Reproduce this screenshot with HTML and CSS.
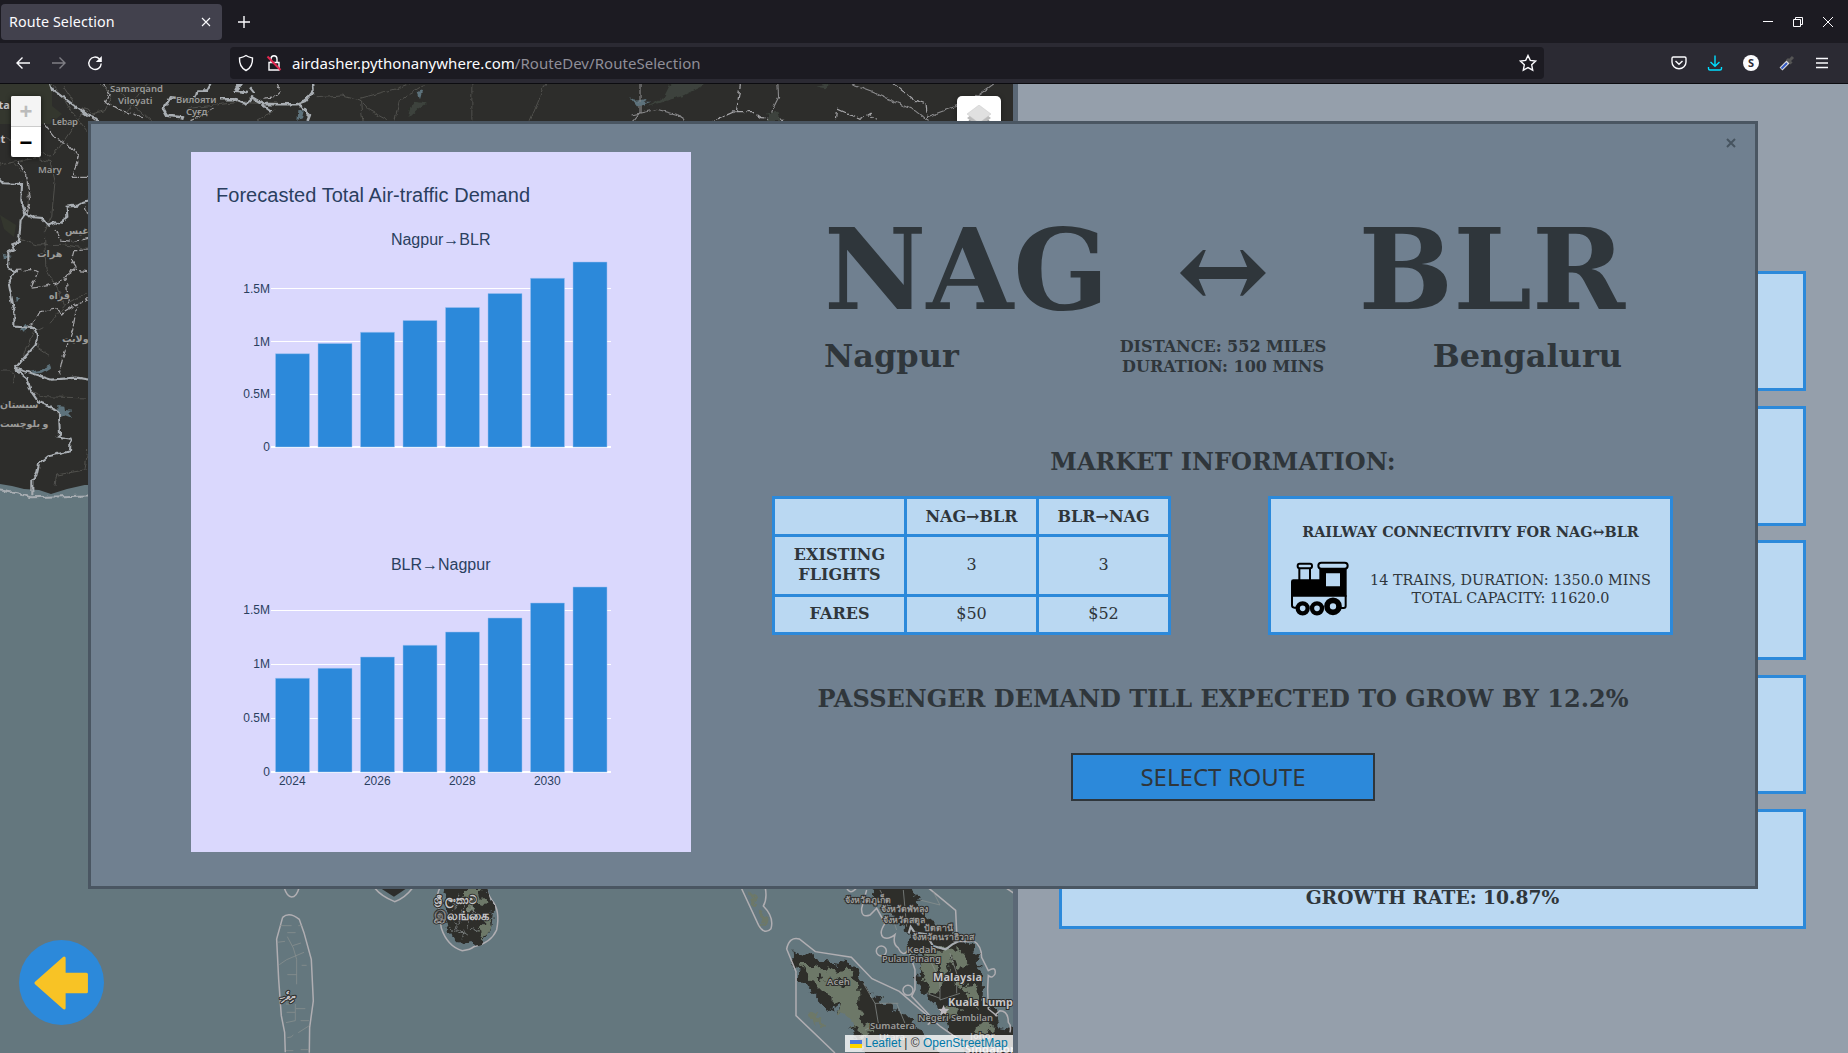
FILE: index.html
```html
<!DOCTYPE html>
<html lang="en">
<head>
<meta charset="utf-8">
<title>Route Selection</title>
<link rel="stylesheet" href="styles.css">
</head>
<body>
<header class="browser">
  <div class="tabbar">
    <div class="tab"><span class="tab-title">Route Selection</span>
      <svg class="tab-close" width="10" height="10" viewBox="0 0 10 10"><path d="M1 1l8 8M9 1L1 9"/></svg>
    </div>
    <svg class="new-tab" width="12" height="12" viewBox="0 0 12 12"><path d="M6 0v12M0 6h12"/></svg>
    <div class="window-controls">
      <svg width="12" height="12" viewBox="0 0 12 12"><path d="M1 5.500h10"/></svg>
      <svg width="12" height="12" viewBox="0 0 12 12"><path d="M1.500 3.500h7v7h-7zM3.500 3V1.500h7v7H9"/></svg>
      <svg width="12" height="12" viewBox="0 0 12 12"><path d="M1 1l10 10M11 1L1 11"/></svg>
    </div>
  </div>
  <div class="toolbar">
    <div class="nav">
      <svg width="16" height="16" viewBox="0 0 16 16"><path d="M15 8H2M7.500 2.500L2 8l5.500 5.500"/></svg>
      <svg class="dim" width="16" height="16" viewBox="0 0 16 16"><path d="M1 8h13M8.500 2.500L14 8l-5.500 5.500"/></svg>
      <svg width="16" height="16" viewBox="0 0 16 16"><path d="M12.500 4A6.200 6.200 0 1 0 14.200 8.500"/><path class="solid" d="M14.800 1v6H8.800z"/></svg>
    </div>
    <div class="url">
      <svg width="16" height="18" viewBox="0 0 16 18"><path d="M8 1.500C10 3 12.500 3.500 14.500 4 14.800 10 12 14.500 8 16.500 4 14.500 1.200 10 1.500 4 3.500 3.500 6 3 8 1.500z"/></svg>
      <svg class="lock" width="16" height="18" viewBox="0 0 16 18"><path d="M3 8.500h10v7.500H3zM5 8V5a3 3.200 0 0 1 6 0v3"/><path class="slash" d="M1.500 2.500l13 13.500"/></svg>
      <span class="address">airdasher.pythonanywhere.com<i>/RouteDev/RouteSelection</i></span>
      <svg class="star" width="18" height="18" viewBox="0 0 18 18"><path d="M9 1.500l2.300 4.900 5.300.7-3.900 3.700 1 5.400L9 13.600l-4.700 2.600 1-5.400L1.400 7.100l5.300-.7z"/></svg>
    </div>
    <div class="extensions">
      <svg width="16" height="16" viewBox="0 0 16 16"><path d="M2.300 2h11.400Q15 2 15 3.300V7a7 6.800 0 0 1-14 0V3.300Q1 2 2.300 2zM4.500 6L8 9.300 11.500 6"/></svg>
      <svg class="download" width="16" height="16" viewBox="0 0 16 16"><path d="M8 .5V11M3.500 7L8 11.300 12.500 7M1.500 12v1.500Q1.500 15 3 15h10q1.500 0 1.500-1.500V12"/></svg>
      <span class="s-badge">S</span>
      <svg class="dropper" width="16" height="16" viewBox="0 0 16 16"><path stroke="#ddd" stroke-width="4" d="M2 14L10 6"/><path class="ink" d="M2.500 13.500L8 8"/><path class="bulb" d="M9.500 6.500L14 2M8 4l4.500 4.500"/></svg>
      <svg width="14" height="14" viewBox="0 0 14 14"><path d="M1 2.500h12M1 7h12M1 11.500h12"/></svg>
    </div>
  </div>
</header>

<main class="page">
  <section class="map">
    <svg class="tiles" width="1013" height="969" viewBox="0 84 1013 969">
      <defs>
        <filter id="rough" x="-5%" y="-5%" width="110%" height="110%"><feTurbulence type="fractalNoise" baseFrequency=".12" numOctaves="3" seed="4"/><feDisplacementMap in="SourceGraphic" scale="14" xChannelSelector="R" yChannelSelector="G"/></filter>
        <filter id="jagged" x="-5%" y="-5%" width="110%" height="110%"><feTurbulence type="fractalNoise" baseFrequency=".15" numOctaves="2" seed="9"/><feDisplacementMap in="SourceGraphic" scale="5" xChannelSelector="R" yChannelSelector="G"/></filter>
      </defs>
      <path class="land" d="M0 84H1013V500H0z"/>
      <path class="sea" d="M0 484l12 2 12 3 15 1 12 4 16-5 22-5v600H0zM88 484h925v569H88z"/>
      <path class="green" d="M0 84h52v22l10 8-12 10H0zM0 215l16 10-2 12-10-8z"/>

      <!-- western borders, roads and lakes -->
      <g filter="url(#jagged)"><g transform="translate(0 80) scale(.3333)">
        <path class="water" d="M175 975l18 2 2 13 20 2-10 8 12 14-22-8-15 6-5-18zM90 875l30-5 30-15 3 8-25 15-38 5zM45 648l16 6-14 12zM8 522l28 6-24 8zM60 750l15-20 8 10-8 18z"/>
        <path class="road" d="M15 170l30 18 50 3 45 38 22-3 75-110 18-28M45 250l35 40 5 90M95 230l55 15 15 60-10 105-22 45 5 115 35 55 20 50M0 255l50-10 60-12M50 475l60 20 70-2 80 12M130 740l-30 15-30 70M0 870l25 0 20 15-5 25M90 930l35 20 135 4M165 1215l5-30 85-15 8-60M150 730l50-60 60-30M110 760l6 45 30 20M190 20l40 60 35 10 20 30M160 15l70 100 30 40M300 12l35 35-20 45-40 10 12 20"/>
        <path class="province" d="M130 130l35 45 40 18 30 38-16 58h45M55 245l25 40 8 75-10 40M165 450l15 30 40 5 44-10M262 510l-40 2-8 30 14 22-25 20M264 575l-52-6-14 30-55 18-50 8 20-48-14-8-55 2M95 740l25-45 45-8 20 12 40-25 40-18M230 680l-12 70-30 85-10 45M200 610l5 60M264 405l-8-25M240 85l45 35"/>
        <path class="border" d="M150 12l5 15 110 80 20 5 12 12M-10 290l18 20 58 2-2 50 12 40 25 10 24 2 20 23 20-10 12 3 25-20-2-30 30-3 20-12 36-8M76 400l-14 20-5 65-20 8 8 14-20 10 0 48 22 10-22 30 18 88 0 47 60 5 8 24-4 26-62 70 110 34 75-6 38 6M46 866l35 30 10 35 25 36 60 25 4 70-8 8 40 6-2 38-65 15-28 22-8 35-12 15 0 45"/>
        <path class="border" d="M-10 1230l60 10 45 12 190-6"/>
      </g></g>
      <!-- northern strip -->
      <g filter="url(#jagged)"><g transform="scale(.459 .3333)">
        <path class="road" d="M230 235l60 80 40 50M330 235l-60 110M410 325l120-20 100 5M600 330l-40 30M690 290l55-5 40 15 20 30 40 30M785 295l80-30 60-32M785 300l5 62M860 362l10-60 55-45M1028 232v130M1195 232l-40 130"/>
        <path class="province" d="M220 245l20 35-10 25 30 25 50 20M465 325l-30 25-20 12M600 245l12 30-12 15-30 5"/>
        <path class="border thick" d="M465 232l-15 40-20 0-5 25-55-5-15 35 8 20 35 5-2 10M530 242l-15 30 25 5M480 298l30 0 25 15 15-20 25 20 70 0 20-10 18-30-2-45M570 315l20 20M650 310l25 35-5 18M520 250l-8 20M545 262l8 14"/>
        <path class="water" d="M650 335l12-5-4 25-10 5zM1370 290l15 12 25-6-20 20zM910 275l10-5-5 25z"/>
        <path class="greenish" d="M1405 325l40-30 20-55 60-8 10 22-50 35-50 20zM900 305l30 5-20 20-20 25z"/>
      </g>
      <g transform="translate(180 80) scale(.561 .3333)">
        <path class="road bright" d="M820 -10v107l-12 25M805 105l45-17 44 20 5 25M1065 -10l2 62-12 40 5 40M1175 0l60 37 75 55 30 40M1460 0l-50 62-80 50"/>
        <path class="province" d="M1000 0l-8 92-42 31M990 95l30 0 15 18 40 5M1265 0l40 57 25 15 2 42M1170 123l2-35 40 30 18-18 10 18"/>
        <path class="water" d="M803 55l12 10 25 0-25 15z"/>
        <path class="greenish" d="M1045 100l22-5 3 28h-20zM1135 20l25-10-10 15z"/>
      </g></g>
      <!-- Lakshadweep and Sri Lanka -->
      <g transform="translate(0 870) scale(.3333)">
        <path class="coast" d="M853 54q8 26 22 27 15 0 22-27M1124 54q20 25 60 41 30-10 54-41"/>
        <path class="land" d="M1142 55h78l-38 25z"/>
        <path class="coast" d="M848 142q20-18 50 6l14 40 22 80 6 125-11 80-1 75M848 142l-18 65 6 120 8 110 10 50 2 60"/>
        <path class="minor" d="M840 167h35M895 167h10M862 188h25M832 217l23-3M862 200l18 34 10 34v75M878 227l25-8M838 284l22-15 52-22M862 314h28M905 286h15M858 402h18M888 416h28M886 402v50l-28 6M860 427h25M902 452h25M895 488l33-21M862 503q14 0 18-8M858 542h22M902 539h24"/>
        <path class="coast" d="M1320 54q-10 15-6 40l10 80q18 55 63 68 25-3 35-12 50-10 68-50 12-60-15-90-15-25-15-36"/>
      </g>
      <g filter="url(#rough)"><g transform="translate(0 870) scale(.3333)">
        <path class="land" d="M1340 34l-8 80 12 70 22 35 35 5 45-10 28-38 5-60-25-82z"/>
        <path class="green" d="M1395 54h50l10 55-30-12-10 35-18-28zM1440 170l30-30 3 40-30 25z"/>
        <path class="minor" d="M1350 95l35 15 25 60 30 15M1380 70l-20 60 30 70M1410 80l5 50 50 10M1350 175l60 20"/>
      </g></g>
      <!-- Malay peninsula and Sumatra -->
      <g filter="url(#rough)"><g transform="translate(720 870) scale(.3333)">
        <path class="green" d="M120 120l15 10 10 30-10 12-15-25zM85 65l18 10 12 25-8 5zM266 435l15-3 38 38-12 4-40-30z"/>
        <path class="land" d="M215 238l40 12 30 20 105 12 35 35 8 30 40 40 70 35 40 40 25 35 70 70H445l-45-80-12-45-35-25-40-10-70-70-20-55z"/>
        <path class="green" d="M240 285l45 0 45 22 60-8 25 35 0 95 45 60-30 10-50-50-40-55-60-60zM350 370l40 0 30 35-10 35z"/>
        <path class="land" d="M445 34l25 58 40 10 5 45 45 30 10 50 30 40-10 60 25 55 55 50 20 60 70 75h160v-85l-85-10-20-60-30-25 2-95-30-60-60-50-65-25-35-55-28-68z"/>
        <path class="green" d="M610 230l45 10 60-5 28 40-22 30-35-20-15 65-45 25-10-50-18-35zM728 350l40-12 5 75-35-35zM640 300l15 60-25 18zM700 330l30 5-10 25zM780 450l40 15-15 30-40-5zM680 400l40 20-10 30-25-10z"/>
        <path class="land" d="M650 260l14 40-12 10zM690 250l14 34-10 6zM300 310l14 20-14 0zM350 320l20 26-14 8z"/>
      </g></g>
      <g transform="translate(720 870) scale(.3333)">
        <path class="coast" d="M64 54l52 112q18 30 37 10 10-35-23-68 12-20 6-54"/>
        <path class="coast" d="M345 549L228 437V305l-28-68q8-38 38-30l48 38 108 17 62 64 82 38 60 52 65 55 75 52M627 55l80 66 4 85M860 55l20 14"/>
        <path class="coast" d="M380 54q10 22 30 0M440 60l-15 55q-2 30 25 20l20-20 25 45q-20 30-5 42 15 8 35-8-8 28 10 40 15 30 30 5l20 60 0 60-10 20 52 55q12 22-4 30M700 212q40 5 60 0 25 15 25 50l20 40q25-15 20 10-8 15-20 5l-2 40 2 60 25 20q-10 2 10-15 25 0 25 35 10 10 5 30"/>
        <circle class="coast" cx="484" cy="243" r="15"/><circle class="coast" cx="564" cy="361" r="15"/>
        <path class="border" d="M566 190l6-20 12 18 35 5 20 35 38 10 20-15 20-10"/>
        <path class="minor" d="M480 60l30 60 20 60M550 60l10 110M620 250l40 80 0 60 60-20M600 90l60 15-20-40M430 340l35 60 70 0M465 400l10 60-40 20M530 400l25 60M690 250l20 60 0 60M620 370l40 15"/>
        <path class="star-city" d="M671 405l5 11 12 1-9 8 3 12-11-7-11 7 3-12-9-8 12-1z"/>
      </g>
      <g class="labels">
        <text x="52" y="125" textLength="26">Lebap</text><text x="38" y="173">Mary</text>
        <text x="110" y="92">Samarqand</text><text x="118" y="104">Viloyati</text>
        <text x="176" y="103">Вилояти</text><text x="186" y="115">Суғд</text>
        <text x="65" y="234">غیس</text><text x="37" y="257">هرات</text><text x="49" y="299">فراه</text><text x="62" y="342">ولایت</text><text x="0" y="408">سیستان</text><text x="0" y="427">و بلوچست</text>
        <text class="country" x="-7" y="109">sta</text><text class="country" x="-6" y="143">at</text>
        <text class="thai" x="845" y="903">จังหวัดภูเก็ต</text><text class="thai" x="881" y="912">จังหวัดพัทลุง</text><text class="thai" x="883" y="923">จังหวัดสตูล</text><text class="thai" x="924" y="931">ปัตตานี</text><text class="thai" x="912" y="940">จังหวัดนราธิวาส</text>
        <text x="907" y="953">Kedah</text><text x="882" y="962" textLength="59">Pulau Pinang</text><text x="827" y="985">Aceh</text><text x="870" y="1029">Sumatera</text><text x="879" y="1040">Utara</text><text x="918" y="1021" textLength="75">Negeri Sembilan</text><text x="970" y="1039">Johor</text>
        <text class="country" x="933" y="981" textLength="49">Malaysia</text><text class="country" x="948" y="1006" textLength="65">Kuala Lump</text><text class="country" x="965" y="1053" textLength="50">Singapor</text>
        <text class="country" x="434" y="904">ශ්‍රී ලංකාව</text><text class="country tamil" x="434" y="920">இலங்கை</text><text class="country" x="280" y="1000">ދިވެހި</text>
      </g>
    </svg>
    <div class="zoom"><span class="off">+</span><span>−</span></div>
    <div class="layers"><svg width="26" height="26" viewBox="0 0 26 26"><path fill="#888" d="M1 17l12 9 12-9-4-3-8 6-8-6z"/><path fill="#bbb" d="M1 13l12 9 12-9-4-3-8 6-8-6z"/><path fill="#e0e0e0" stroke="#c8c8c8" stroke-width=".5" d="M13 0l12 9-12 9L1 9z"/></svg></div>
    <div class="back"><svg width="56" height="56" viewBox="0 0 54 54"><path d="M2 27L29 3v15.500h21.500v17H29V51z"/></svg></div>
    <div class="attribution"><svg width="12" height="8" viewBox="0 0 12 8"><path fill="#4c7be1" d="M0 0h12v4H0z"/><path fill="#ffd500" d="M0 4h12v4H0z"/></svg><span><a>Leaflet</a> | © <a>OpenStreetMap</a></span></div>
  </section>
  <aside class="routes">
    <div class="route-card"></div><div class="route-card"></div><div class="route-card"></div><div class="route-card"></div>
    <div class="route-card">GROWTH RATE: 10.87%</div>
  </aside>

  <div class="modal">
    <svg class="modal-close" width="10" height="10" viewBox="0 0 10 10"><path d="M1 1l8 8M9 1L1 9"/></svg>
    <svg class="chart" width="500" height="700" viewBox="191 152 500 700">
      <text class="title" x="216" y="202" textLength="314">Forecasted Total Air-traffic Demand</text>
      <text class="subtitle" x="440.700" y="245">Nagpur→BLR</text>
      <path class="grid" d="M271 288.500H611M271 341.500H611M271 394.500H611"/><path class="zero" d="M271 447H611"/>
      <g class="tick-y"><text x="270" y="293">1.5M</text><text x="270" y="346">1M</text><text x="270" y="398">0.5M</text><text x="270" y="451">0</text></g>
      <g class="bars"><path d="M275.500 447V353.700h34V447zM318 447V343.500h34V447zM360.500 447V332.300h34V447zM403 447V320.500h34V447zM445.500 447V307.500h34V447zM488 447V293.500h34V447zM530.500 447V278.300h34V447zM573 447V262h34V447z"/></g>
      <text class="subtitle" x="440.700" y="570">BLR→Nagpur</text>
      <path class="grid" d="M271 610.500H611M271 664.500H611M271 718.500H611"/><path class="zero" d="M271 772H611"/>
      <g class="tick-y"><text x="270" y="614">1.5M</text><text x="270" y="668">1M</text><text x="270" y="722">0.5M</text><text x="270" y="776">0</text></g>
      <g class="bars"><path d="M275.500 772V678.300h34V772zM318 772V668.300h34V772zM360.500 772V657h34V772zM403 772V645.300h34V772zM445.500 772V632h34V772zM488 772V618h34V772zM530.500 772V603h34V772zM573 772V587h34V772z"/></g>
      <g class="tick-x"><text x="292.300" y="785">2024</text><text x="377.300" y="785">2026</text><text x="462.300" y="785">2028</text><text x="547.300" y="785">2030</text></g>
    </svg>
    <div class="details">
      <div class="route">
        <div class="from"><b class="code">NAG</b><b class="city">Nagpur</b></div>
        <div class="link"><b class="code">↔</b><b>DISTANCE: 552 MILES<br>DURATION: 100 MINS</b></div>
        <div class="to"><b class="code">BLR</b><b class="city">Bengaluru</b></div>
      </div>
      <h2>MARKET INFORMATION:</h2>
      <div class="market">
        <table>
          <tr class="short"><th></th><th>NAG→BLR</th><th>BLR→NAG</th></tr>
          <tr class="tall"><th>EXISTING FLIGHTS</th><td>3</td><td>3</td></tr>
          <tr class="short"><th>FARES</th><td>$50</td><td>$52</td></tr>
        </table>
        <div class="rail">
          <b>RAILWAY CONNECTIVITY FOR NAG↔BLR</b>
          <div class="rail-info">
            <svg width="60" height="55" viewBox="240 395 180 165">
              <path fill="none" stroke="#000" stroke-width="6" d="M268 418v34M300 418v34M246 498v30q0 7 7 7h10M407 498v32q0 6-6 6h-8"/>
              <rect x="263" y="403" width="43" height="14" rx="6" fill="none" stroke="#000" stroke-width="6"/>
              <rect x="325" y="400" width="88" height="18" rx="9" fill="none" stroke="#000" stroke-width="6"/>
              <path fill-rule="evenodd" d="M328 418h82v84H243v-45q0-7 7-7h78zM348 432v39h42v-39z"/>
              <g fill="none" stroke="#000" stroke-width="13"><circle cx="278" cy="537" r="15"/><circle cx="321" cy="537" r="15"/><circle cx="369" cy="531" r="18" stroke-width="17"/></g>
            </svg>
            <p>14 TRAINS, DURATION: 1350.0 MINS<br>TOTAL CAPACITY: 11620.0</p>
          </div>
        </div>
      </div>
      <h2>PASSENGER DEMAND TILL EXPECTED TO GROW BY 12.2%</h2>
      <button class="select">SELECT ROUTE</button>
    </div>
  </div>
</main>
</body>
</html>
```
FILE: styles.css
```css
* { box-sizing: border-box; }
body { margin: 0; height: 1053px; overflow: hidden; font-family: "DejaVu Serif", serif; color: #2f363b; background: #959fab; }
svg { display: block; flex: none; }

.browser { height: 84px; font-family: "Noto Sans", sans-serif; font-size: 14.3px; color: #fbfbfe; border-bottom: 1px solid #0c0c10; background: #2b2a33; }
.browser svg { fill: none; stroke: #fbfbfe; stroke-width: 1.4; }
.browser .solid { fill: #fbfbfe; stroke: none; }
.tabbar { height: 43px; background: #1c1b22; display: flex; align-items: center; padding-left: 1px; }
.tab { width: 221px; height: 36px; background: #42414d; border-radius: 4px; display: flex; align-items: center; justify-content: space-between; padding: 0 11px 0 8px; }
.tab-title { letter-spacing: .1px; }
.browser .tab-close { stroke-width: 1.1; }
.new-tab { margin-left: 16px; }
.window-controls { margin-left: auto; display: flex; gap: 18px; padding-right: 14px; }
.browser .window-controls svg { stroke-width: 1; }
.toolbar { height: 40px; display: flex; align-items: center; }
.nav { width: 230px; display: flex; gap: 20px; padding-left: 15px; }
.nav .dim { opacity: .4; }
.url { width: 1314px; height: 32px; border-radius: 4px; background: #1c1b22; display: flex; align-items: center; padding: 0 7px 0 8px; }
.url .lock { margin: 0 10px 0 12px; }
.browser .slash { stroke: #e22850; stroke-width: 2; }
.address { font-size: 15px; letter-spacing: .04px; }
.address i { font-style: normal; color: #8f8e98; }
.star { margin-left: auto; }
.extensions { display: flex; align-items: center; gap: 20px; padding-left: 127px; }
.browser .download { stroke: #00ddff; }
.dropper .ink { stroke: #355ac4; stroke-width: 2; }
.dropper .bulb { stroke: #555; stroke-width: 3; }
.s-badge { width: 16px; height: 16px; border-radius: 50%; background: #fbfbfe; color: #2b2a33; font-size: 11px; font-weight: 700; line-height: 16px; text-align: center; }

.page { position: relative; height: 969px; display: flex; }
.map { position: relative; width: 1018px; border-right: 5px solid #5b6876; }
.tiles path, .tiles circle { vector-effect: non-scaling-stroke; fill: none; }
.tiles .land { fill: #2d2d2b; }
.tiles .sea { fill: #64777e; }
.tiles .green { fill: #6d7868; }
.tiles .greenish { fill: #3c433c; }
.tiles > .green { fill: #34372e; }
.tiles .water { fill: #5d727b; }
.tiles .road { stroke: #595956; stroke-width: .8; }
.tiles .bright { stroke: #8a8a8c; stroke-width: 1.1; }
.tiles .minor { stroke: #8d9290; stroke-width: .7; }
.tiles .province { stroke: #a5a5a8; stroke-width: 1.2; stroke-dasharray: 9 2; }
.tiles .border { stroke: #a8adb2; stroke-width: 2.1; }
.tiles .thick { stroke-width: 2.6; }
.tiles .coast { stroke: #b0aeb2; stroke-width: 1.5; }
.tiles .star-city { fill: #bdb9bf; }
.labels { font: 600 9.500px "Noto Sans", "DejaVu Sans", sans-serif; fill: #9b9b99; stroke: #2d2d2b; stroke-width: 2px; paint-order: stroke; }
.labels .thai { font-size: 8.800px; }
.labels .country { font-size: 11px; font-weight: 700; fill: #c6c5c7; }
.labels .tamil { font-size: 12.500px; }
.zoom { position: absolute; left: 11px; top: 12px; width: 30px; border-radius: 2px; overflow: hidden; background: #fff; box-shadow: 0 1px 5px rgba(0,0,0,.65); font: bold 22px/32px "Liberation Sans", sans-serif; text-align: center; color: #000; }
.zoom span { display: block; height: 30px; }
.zoom .off { height: 31px; background: #f4f4f4; color: #bbb; border-bottom: 1px solid #ccc; }
.layers { position: absolute; left: 957px; top: 12px; width: 44px; height: 44px; padding: 9px; background: #fff; border-radius: 5px; box-shadow: 0 1px 5px rgba(0,0,0,.4); }
.back { position: absolute; left: 19px; top: 856px; width: 85px; height: 85px; border-radius: 50%; background: #2c89da; display: grid; place-items: center; }
.back path { fill: #f8c325; stroke: #f8c325; stroke-width: 3; stroke-linejoin: round; }
.attribution { position: absolute; right: 0; bottom: 1px; width: 168px; height: 17px; padding-left: 5px; background: rgba(255,255,255,.8); display: flex; align-items: center; gap: 3px; font: 12px/17px "Liberation Sans", sans-serif; color: #333; white-space: nowrap; }
.attribution a { color: #0078a8; }
.routes { flex: 1; display: flex; flex-direction: column; gap: 14.500px; padding: 187.400px 42px 0 41px; }
.route-card { height: 119.900px; border: 3px solid #2c89da; background: #bad8f2; font-size: 18.700px; font-weight: 700; text-align: center; padding-top: 72px; line-height: 26px; }

.modal { position: absolute; left: 88px; top: 37px; width: 1670px; height: 768px; border: 3px solid #4a5662; background: #708090; display: flex; }
.modal-close { position: absolute; right: 19px; top: 14px; stroke: #46535f; stroke-width: 2; }
.chart { margin: 28px 81px 0 100px; background: #dad8fd; font-family: "Liberation Sans", sans-serif; }
.chart text { fill: #2a3f5f; }
.title { font-size: 20px; }
.subtitle { font-size: 16px; text-anchor: middle; }
.grid { stroke: #fff; }
.zero { stroke: #fff; stroke-width: 2; }
.tick-y, .tick-x { font-size: 12px; }
.tick-y { text-anchor: end; }
.tick-x { text-anchor: middle; }
.bars { fill: #2c89da; stroke: #9cbff0; stroke-width: .5; }
.details { width: 902px; padding-top: 81px; display: flex; flex-direction: column; align-items: center; }
.route { width: 100%; height: 242px; padding: 0 52px 0 52px; display: grid; grid-template-columns: 1fr auto 1fr; }
.route > div { display: flex; flex-direction: column; gap: 2px; line-height: 20px; white-space: nowrap; }
.route .link { align-items: center; text-align: center; }
.route .to { align-items: flex-end; }
.to .code { margin-right: -3px; }
.code { font-size: 112px; line-height: 130px; }
.city { font-size: 32px; line-height: 38px; }
h2 { margin: 0; font-size: 24px; line-height: 30px; white-space: nowrap; }
.market { width: 901px; align-self: flex-start; margin: 19px 0 49px; display: flex; justify-content: space-between; }
table { width: 399px; height: 139px; border-collapse: collapse; table-layout: fixed; background: #bad8f2; line-height: 20px; text-align: center; }
th, td { border: 3px solid #2c89da; padding: 0 12px; }
.short { height: 38px; }
.tall { height: 59px; }
.rail { width: 405px; height: 139px; border: 3px solid #2c89da; background: #bad8f2; font-size: 14.400px; text-align: center; padding-top: 24px; line-height: 18px; }
.rail-info { display: flex; align-items: center; gap: 20px; padding: 20px 17px 0 19px; }
.rail p { margin: 0; white-space: nowrap; }
.select { width: 304px; height: 48px; margin-top: 39px; border: 2px solid #2f363b; background: #2c89da; color: #2f363b; font: 24px/42px "Noto Sans", sans-serif; padding: 0; }
```
